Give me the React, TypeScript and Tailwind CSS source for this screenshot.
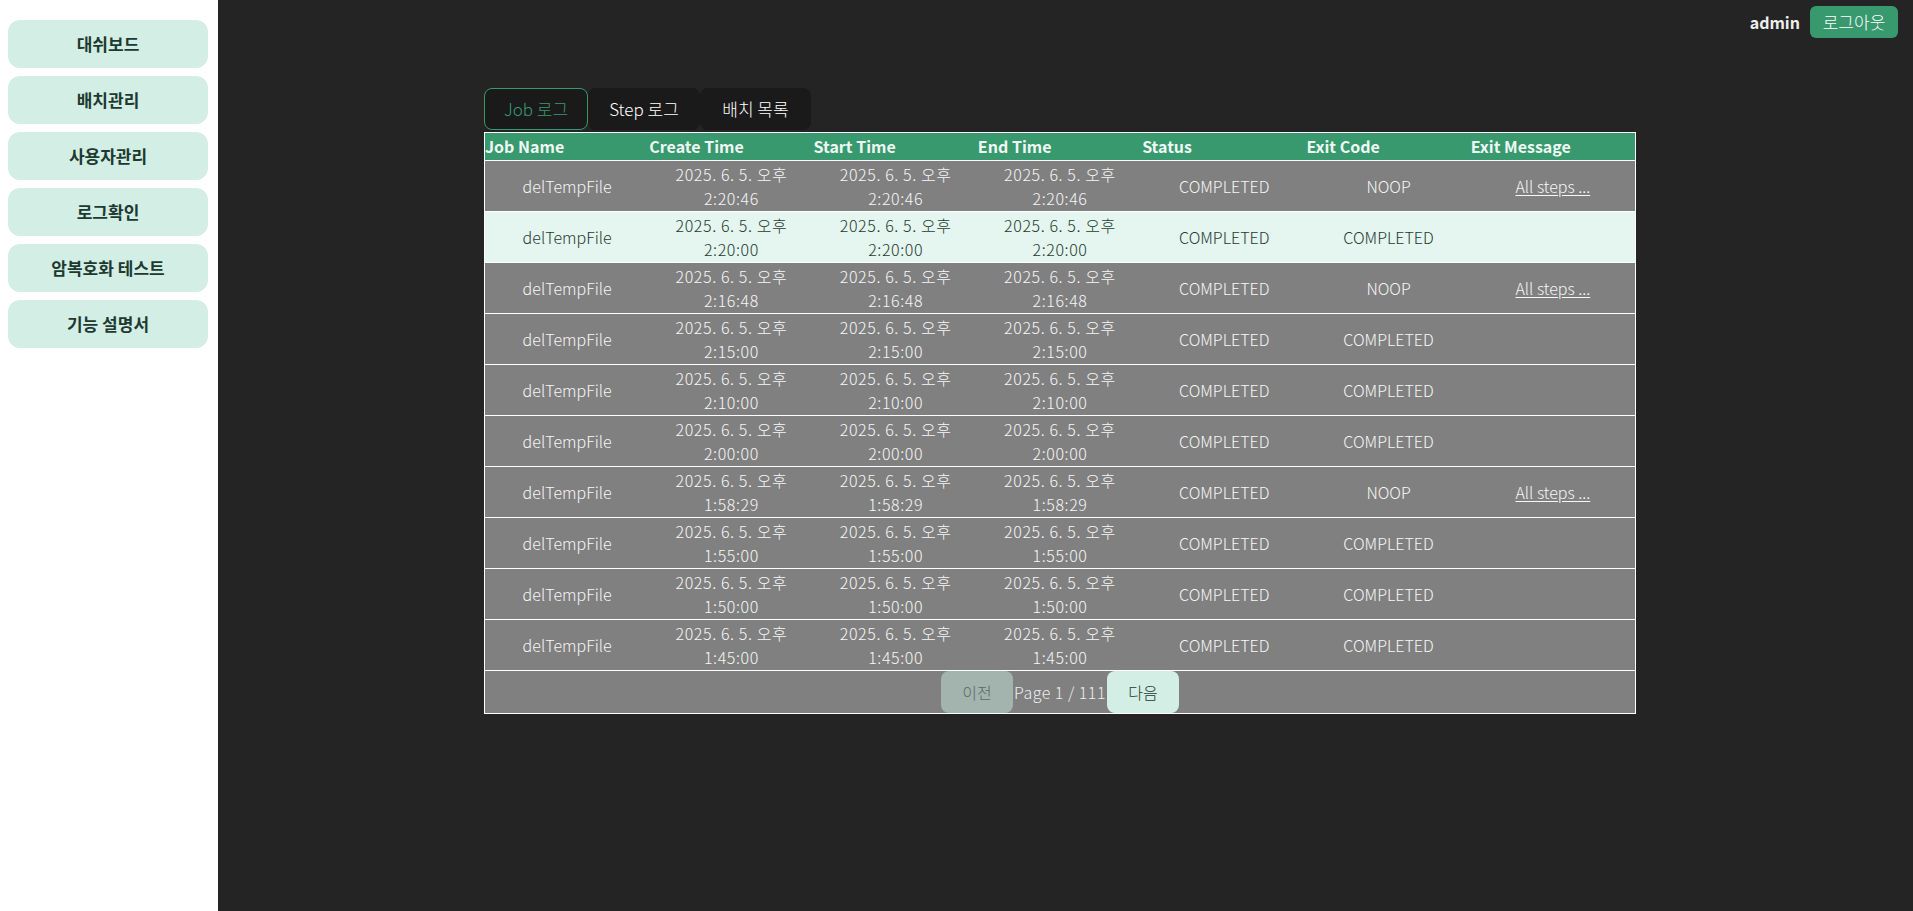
import React from "react";

const MENU = ["대쉬보드", "배치관리", "사용자관리", "로그확인", "암복호화 테스트", "기능 설명서"];

type Row = {
  name: string;
  time: string;
  status: string;
  exitCode: string;
  exitMessage?: string;
};

const ROWS: Row[] = [
  { name: "delTempFile", time: "2:20:46", status: "COMPLETED", exitCode: "NOOP", exitMessage: "All steps ..." },
  { name: "delTempFile", time: "2:20:00", status: "COMPLETED", exitCode: "COMPLETED" },
  { name: "delTempFile", time: "2:16:48", status: "COMPLETED", exitCode: "NOOP", exitMessage: "All steps ..." },
  { name: "delTempFile", time: "2:15:00", status: "COMPLETED", exitCode: "COMPLETED" },
  { name: "delTempFile", time: "2:10:00", status: "COMPLETED", exitCode: "COMPLETED" },
  { name: "delTempFile", time: "2:00:00", status: "COMPLETED", exitCode: "COMPLETED" },
  { name: "delTempFile", time: "1:58:29", status: "COMPLETED", exitCode: "NOOP", exitMessage: "All steps ..." },
  { name: "delTempFile", time: "1:55:00", status: "COMPLETED", exitCode: "COMPLETED" },
  { name: "delTempFile", time: "1:50:00", status: "COMPLETED", exitCode: "COMPLETED" },
  { name: "delTempFile", time: "1:45:00", status: "COMPLETED", exitCode: "COMPLETED" },
];

const HEADERS = ["Job Name", "Create Time", "Start Time", "End Time", "Status", "Exit Code", "Exit Message"];

const FONT = { fontFamily: '"Noto Sans CJK KR", "Noto Sans", sans-serif' };

const DateCell = ({ time }: { time: string }) => (
  <td className="px-1 text-center leading-[24px] tracking-[0.6px]">
    2025. 6. 5. 오후
    <br />
    {time}
  </td>
);

const Sidebar = () => (
  <aside className="flex w-[218px] shrink-0 flex-col gap-2 bg-white pl-2 pr-[10px] pt-5">
    {MENU.map((label) => (
      <button
        key={label}
        className="h-12 w-full rounded-xl bg-[#d3eee5] text-[17px] font-bold text-[#1d3a30]"
      >
        {label}
      </button>
    ))}
  </aside>
);

const Tabs = () => (
  <div className="flex">
    <button className="h-[42px] w-[104px] rounded-lg border border-[#38996f] bg-[#1a1a1a] text-[17px] font-light text-[#38996f]">
      Job 로그
    </button>
    <button className="h-[42px] w-[112px] rounded-lg bg-[#1a1a1a] text-[17px] font-light text-white">
      Step 로그
    </button>
    <button className="h-[42px] w-[111px] rounded-lg bg-[#1a1a1a] text-[17px] font-light text-white">
      배치 목록
    </button>
  </div>
);

const LogTable = () => (
  <div className="w-[1152px] border border-white">
    <table className="w-full table-fixed border-collapse">
      <thead>
        <tr className="h-[27px] border-b border-white bg-[#38996f]">
          {HEADERS.map((h) => (
            <th key={h} className="text-left text-[16px] font-bold leading-none text-[#eef8f3]">
              {h}
            </th>
          ))}
        </tr>
      </thead>
      <tbody className="text-[16px] font-light">
        {ROWS.map((row, i) => {
          const active = i === 1;
          return (
            <tr
              key={i}
              className={`h-[51px] border-b border-white ${
                active ? "bg-[#e5f5ef] text-[#1d3a30]" : "bg-[#808080] text-[#f7f7f7]"
              }`}
            >
              <td className="text-center">{row.name}</td>
              <DateCell time={row.time} />
              <DateCell time={row.time} />
              <DateCell time={row.time} />
              <td className="text-center">{row.status}</td>
              <td className="text-center">{row.exitCode}</td>
              <td className="text-center">
                {row.exitMessage && <span className="underline underline-offset-2">{row.exitMessage}</span>}
              </td>
            </tr>
          );
        })}
      </tbody>
    </table>
    <div className="flex h-[42px] items-center justify-center bg-[#808080] text-[16px] font-light">
      <button className="h-full w-[72px] rounded-lg bg-[#a3b3ae] text-[#5b6b65]">이전</button>
      <span className="px-[1px] tracking-[0.5px] text-[#eeeeee]">Page 1 / 111</span>
      <button className="h-full w-[72px] rounded-lg bg-[#d3eee5] text-[#1d3a30]">다음</button>
    </div>
  </div>
);

export default function App() {
  return (
    <div className="flex h-[911px] w-full bg-[#242424]" style={FONT}>
      <Sidebar />
      <main className="flex flex-1 flex-col">
        <div className="flex items-center justify-end gap-[10px] pr-[15px] pt-[6px]">
          <span className="text-[16px] font-bold text-[#eeeeee]">admin</span>
          <button className="h-8 w-[88px] rounded-md bg-[#38996f] text-[17px] font-light text-white">
            로그아웃
          </button>
        </div>
        <div className="flex flex-col pl-[266px] pt-[50px]">
          <Tabs />
          <div className="mt-[2px]">
            <LogTable />
          </div>
        </div>
      </main>
    </div>
  );
}
